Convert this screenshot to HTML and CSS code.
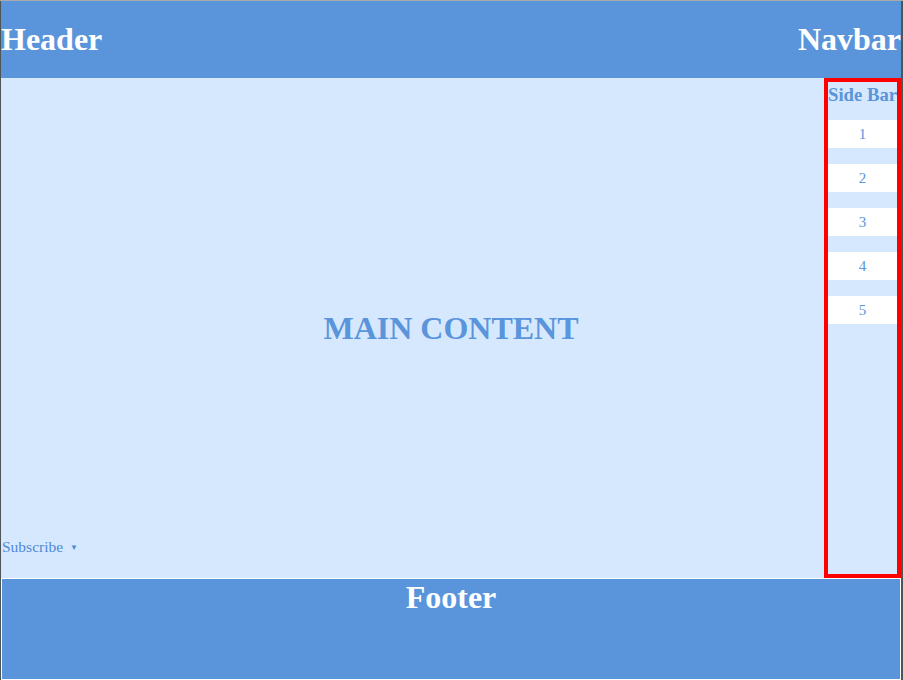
FILE: index.html
```html
<!DOCTYPE html>
<html lang="en">
<head>
    <meta charset="UTF-8">
    <meta name="viewport" content="width=device-width, initial-scale=1.0">
    <title>Layout</title>
    <link rel="stylesheet" href="styles.css">
</head>
<body>
    <div class="page">
        <header class="top-bar">
            <h1>Header</h1>
            <h1>Navbar</h1>
        </header>
        <div class="content">
            <h1 class="main-title">MAIN CONTENT</h1>
            <aside class="sidebar">
                <h3>Side Bar</h3>
                <ul class="side-list">
                    <li>1</li>
                    <li>2</li>
                    <li>3</li>
                    <li>4</li>
                    <li>5</li>
                </ul>
            </aside>
            <div class="subscribe">Subscribe <span class="caret">&#9660;</span></div>
        </div>
        <footer class="bottom-bar">
            <h1>Footer</h1>
        </footer>
    </div>
</body>
</html>
```

FILE: styles.css
```css
body {
    margin: 0;
    padding: 0 2px 0 1px;
    background-color: #4d5656;
    border-top: 1px solid #a9a9a9;
    font-family: "Liberation Serif", "Times New Roman", serif;
}
.page {
    background-color: #d6e8fe;
}
.top-bar {
    display: flex;
    justify-content: space-between;
    align-items: center;
    height: 77px;
    background-color: #5a95db;
    color: white;
}
.top-bar h1 {
    margin: 0;
    font-size: 32px;
}
.content {
    display: grid;
    grid-template-columns: 1fr 77px;
    grid-template-rows: 1fr auto;
    height: 500px;
}
.main-title {
    grid-column: 1 / -1;
    grid-row: 1 / -1;
    align-self: center;
    justify-self: center;
    margin: 0;
    font-size: 32px;
    color: #5a95db;
}
.sidebar {
    grid-column: 2;
    grid-row: 1 / -1;
    border: 4px solid red;
    text-align: center;
    color: #5a95db;
}
.sidebar h3 {
    margin: 2px 0 14px;
    font-size: 18.72px;
    white-space: nowrap;
}
.side-list {
    list-style: none;
    margin: 0;
    padding: 0;
    display: flex;
    flex-direction: column;
    gap: 16px;
}
.side-list li {
    height: 28px;
    line-height: 28px;
    background: white;
    font-size: 15px;
}
.subscribe {
    grid-column: 1;
    grid-row: 2;
    margin: 0 0 22px 1px;
    font-size: 15.5px;
    color: #4f8ad6;
}
.caret {
    font-size: 8px;
    margin-left: 3px;
    vertical-align: 2px;
}
.bottom-bar {
    height: 100px;
    border: 1px solid white;
    background-color: #5a95db;
    color: white;
    text-align: center;
}
.bottom-bar h1 {
    margin: 0;
    font-size: 32px;
}
```
